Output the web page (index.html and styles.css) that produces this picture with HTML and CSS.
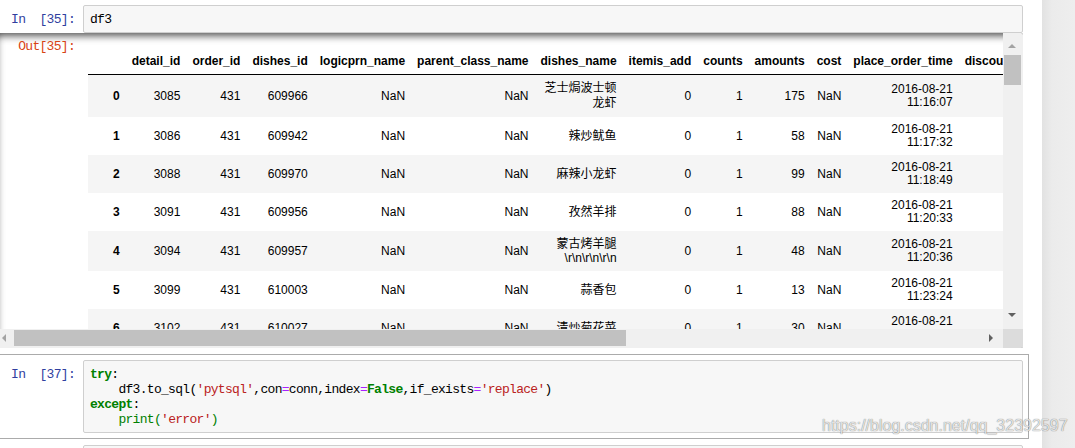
FILE: index.html
```html
<!DOCTYPE html>
<html>
<head>
<meta charset="utf-8">
<title>Notebook</title>
<link rel="stylesheet" href="styles.css">
</head>
<body>
<div class="page">
  <div class="main">
    <div class="notebook">
      <div class="cell">
        <div class="input">
          <div class="prompt in-prompt">In&nbsp;&nbsp;[35]:</div>
          <div class="input-area"><pre class="code">df3</pre></div>
        </div>
        <div class="output-scroll">
          <div class="output">
            <div class="prompt out-prompt">Out[35]:</div>
            <div class="output-sub">
              <table class="df">
                <thead>
                  <tr>
                    <th class="idx"></th>
                    <th>detail_id</th><th>order_id</th><th>dishes_id</th><th>logicprn_name</th><th>parent_class_name</th><th>dishes_name</th><th>itemis_add</th><th>counts</th><th>amounts</th><th>cost</th><th>place_order_time</th><th>discount_amt</th><th>discount_reason</th><th>kick_back</th><th>add_inprice</th><th>add_info</th><th>bar_code</th><th>picture_file</th><th>emp_id</th>
                  </tr>
                </thead>
                <tbody>
                  <tr><th class="idx">0</th><td>3085</td><td>431</td><td>609966</td><td>NaN</td><td>NaN</td><td><span class="cn">芝士焗波士顿龙虾</span></td><td>0</td><td>1</td><td>175</td><td>NaN</td><td>2016-08-21 11:16:07</td><td>NaN</td><td>NaN</td><td>NaN</td><td>0</td><td>NaN</td><td>NaN</td><td>caipu/104001.jpg</td><td>1442</td></tr>
                  <tr><th class="idx">1</th><td>3086</td><td>431</td><td>609942</td><td>NaN</td><td>NaN</td><td><span class="cn">辣炒鱿鱼</span></td><td>0</td><td>1</td><td>58</td><td>NaN</td><td>2016-08-21 11:17:32</td><td>NaN</td><td>NaN</td><td>NaN</td><td>0</td><td>NaN</td><td>NaN</td><td>caipu/202003.jpg</td><td>1442</td></tr>
                  <tr><th class="idx">2</th><td>3088</td><td>431</td><td>609970</td><td>NaN</td><td>NaN</td><td><span class="cn">麻辣小龙虾</span></td><td>0</td><td>1</td><td>99</td><td>NaN</td><td>2016-08-21 11:18:49</td><td>NaN</td><td>NaN</td><td>NaN</td><td>0</td><td>NaN</td><td>NaN</td><td>caipu/103002.jpg</td><td>1442</td></tr>
                  <tr><th class="idx">3</th><td>3091</td><td>431</td><td>609956</td><td>NaN</td><td>NaN</td><td><span class="cn">孜然羊排</span></td><td>0</td><td>1</td><td>88</td><td>NaN</td><td>2016-08-21 11:20:33</td><td>NaN</td><td>NaN</td><td>NaN</td><td>0</td><td>NaN</td><td>NaN</td><td>caipu/107001.jpg</td><td>1442</td></tr>
                  <tr><th class="idx">4</th><td>3094</td><td>431</td><td>609957</td><td>NaN</td><td>NaN</td><td><span class="cn">蒙古烤羊腿</span><span class="nw">\r\n\r\n\r\n</span></td><td>0</td><td>1</td><td>48</td><td>NaN</td><td>2016-08-21 11:20:36</td><td>NaN</td><td>NaN</td><td>NaN</td><td>0</td><td>NaN</td><td>NaN</td><td>caipu/107002.jpg</td><td>1442</td></tr>
                  <tr><th class="idx">5</th><td>3099</td><td>431</td><td>610003</td><td>NaN</td><td>NaN</td><td><span class="cn">蒜香包</span></td><td>0</td><td>1</td><td>13</td><td>NaN</td><td>2016-08-21 11:23:24</td><td>NaN</td><td>NaN</td><td>NaN</td><td>0</td><td>NaN</td><td>NaN</td><td>caipu/601003.jpg</td><td>1442</td></tr>
                  <tr><th class="idx">6</th><td>3102</td><td>431</td><td>610027</td><td>NaN</td><td>NaN</td><td><span class="cn">清炒菊花菜</span></td><td>0</td><td>1</td><td>30</td><td>NaN</td><td>2016-08-21 11:23:53</td><td>NaN</td><td>NaN</td><td>NaN</td><td>0</td><td>NaN</td><td>NaN</td><td>caipu/301004.jpg</td><td>1442</td></tr>
                  <tr><th class="idx">7</th><td>3103</td><td>431</td><td>609974</td><td>NaN</td><td>NaN</td><td><span class="cn">麻辣小龙虾</span></td><td>0</td><td>1</td><td>99</td><td>NaN</td><td>2016-08-21 11:24:01</td><td>NaN</td><td>NaN</td><td>NaN</td><td>0</td><td>NaN</td><td>NaN</td><td>caipu/103002.jpg</td><td>1442</td></tr>
                </tbody>
              </table>
            </div>
          </div>
          <div class="vbar">
            <span class="arrow up"></span>
            <span class="vthumb"></span>
            <span class="arrow down"></span>
          </div>
          <div class="hbar">
            <span class="arrow left"></span>
            <span class="hthumb"></span>
            <span class="arrow right"></span>
          </div>
          <div class="corner"></div>
        </div>
      </div>

      <div class="cell selected">
        <div class="input">
          <div class="prompt in-prompt">In&nbsp;&nbsp;[37]:</div>
          <div class="input-area"><pre class="code"><span class="kw">try</span>:
    df3.to_sql(<span class="str">'pytsql'</span>,con<span class="op">=</span>conn,index<span class="op">=</span><span class="kw">False</span>,if_exists<span class="op">=</span><span class="str">'replace'</span>)
<span class="kw">except</span>:
    <span class="bi">print</span><span class="bi">(</span><span class="str">'error'</span><span class="bi">)</span></pre></div>
        </div>
      </div>

      <div class="cell">
        <div class="input">
          <div class="prompt in-prompt">In&nbsp;&nbsp;[&nbsp;&nbsp;]:</div>
          <div class="input-area"><pre class="code"> </pre></div>
        </div>
      </div>
    </div>
  </div>
  <div class="side"></div>
</div>
<div class="watermark">https://blog.csdn.net/qq_32392597</div>
</body>
</html>
```

FILE: styles.css
```css
html, body {
  margin: 0;
  padding: 0;
  height: 448px;
  overflow: hidden;
  background: #fff;
}

body {
  font-family: "Liberation Sans", Arial, "Noto Sans CJK SC", sans-serif;
  color: #000;
}

.page {
  display: flex;
  height: 448px;
}

.main {
  width: 1042px;
  flex: none;
  background: #fff;
  overflow: hidden;
}

.side {
  flex: 1;
  background: linear-gradient(to right, #e2e2e2, #ebebeb 30%, #eeeeee);
}

.notebook {
  margin: -1px 0 0 -10px;
  width: 1039px;
}

.cell {
  border: 1px solid transparent;
  padding: 5px;
}

.cell.selected {
  border-color: #ababab;
}

.input {
  display: flex;
}

.prompt {
  width: 87px;
  flex: none;
  box-sizing: border-box;
  padding: 7px 8px 0 0;
  text-align: right;
  font-family: "Liberation Mono", "Noto Sans CJK SC", monospace;
  font-size: 13px;
  letter-spacing: -0.7px;
  line-height: 15px;
  white-space: nowrap;
}

.in-prompt {
  color: #303f9f;
}

.out-prompt {
  color: #d84315;
  padding-top: 6px;
}

.input-area {
  flex: 1;
  min-width: 0;
  border: 1px solid #cfcfcf;
  border-radius: 2px;
  background: #f7f7f7;
  padding: 6px 6px 5px;
}

.code {
  margin: 0;
  font-family: "Liberation Mono", "Noto Sans CJK SC", monospace;
  font-size: 13px;
  line-height: 15px;
  letter-spacing: -0.7px;
  color: #000;
  white-space: pre;
}

.kw {
  color: #008000;
  font-weight: bold;
}

.str {
  color: #ba2121;
}

.op {
  color: #aa22ff;
}

.bi {
  color: #008000;
}

/* output area */
.output-scroll {
  position: relative;
  height: 315px;
  overflow: hidden;
  border-radius: 2px;
  box-shadow: inset 0 2px 8px rgba(0, 0, 0, 0.8);
}

.output {
  display: flex;
}

.output-sub {
  padding: 16px 0 0 5px;
}

.df {
  border-collapse: collapse;
  border-spacing: 0;
  font-size: 12px;
  color: #000;
}

.df th,
.df td {
  padding: 6px;
  text-align: right;
  vertical-align: middle;
  line-height: 13px;
  white-space: normal;
}

.df th {
  font-weight: bold;
}

.df thead {
  border-bottom: 1px solid #000;
}

.df tbody tr:nth-child(odd) {
  background: #f5f5f5;
}

.df .idx {
  padding-left: 25px;
}

.cn {
  line-height: 15px;
  vertical-align: top;
}

.nw {
  white-space: nowrap;
}

/* fake scrollbars */
.vbar {
  position: absolute;
  top: 0;
  right: 0;
  bottom: 19px;
  width: 20px;
  background: #f0f0f0;
}

.vthumb {
  position: absolute;
  top: 22px;
  left: 1px;
  width: 17px;
  height: 30px;
  background: #c1c1c1;
}

.hbar {
  position: absolute;
  left: 0;
  right: 20px;
  bottom: 0;
  height: 19px;
  background: #f0f0f0;
}

.hthumb {
  position: absolute;
  top: 1px;
  left: 18px;
  width: 612px;
  height: 16px;
  background: #c1c1c1;
}

.corner {
  position: absolute;
  right: 0;
  bottom: 0;
  width: 20px;
  height: 19px;
  background: #dcdcdc;
}

.arrow {
  position: absolute;
  width: 0;
  height: 0;
}

.arrow.up {
  top: 11px;
  left: 5px;
  border-left: 4px solid transparent;
  border-right: 4px solid transparent;
  border-bottom: 4px solid #a3a3a3;
}

.arrow.down {
  bottom: 12px;
  left: 5px;
  border-left: 4px solid transparent;
  border-right: 4px solid transparent;
  border-top: 4px solid #606060;
}

.arrow.left {
  top: 5px;
  left: 6px;
  border-top: 4px solid transparent;
  border-bottom: 4px solid transparent;
  border-right: 4px solid #a3a3a3;
}

.arrow.right {
  top: 5px;
  right: 10px;
  border-top: 4px solid transparent;
  border-bottom: 4px solid transparent;
  border-left: 4px solid #606060;
}

.watermark {
  position: absolute;
  left: 822px;
  top: 418px;
  font-family: "Liberation Sans", Arial, sans-serif;
  font-size: 16px;
  line-height: 16px;
  color: rgba(240, 240, 240, 0.9);
  text-shadow: 0 0 1px rgba(0, 0, 0, 0.35), 0 0 1px rgba(0, 0, 0, 0.35);
  white-space: nowrap;
}
```
